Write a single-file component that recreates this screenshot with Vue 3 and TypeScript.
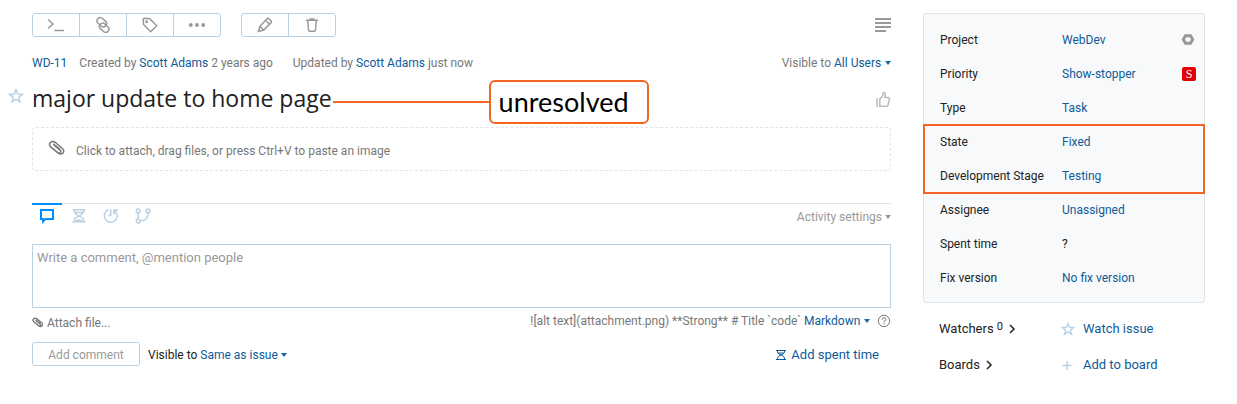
<script setup lang="ts">
import { ref } from 'vue'

interface Field {
  name: string
  value: string
  plain?: boolean
  mark?: 'project' | 'priority'
}

const groups: { marked: boolean; fields: Field[] }[] = [
  {
    marked: false,
    fields: [
      { name: 'Project', value: 'WebDev', mark: 'project' },
      { name: 'Priority', value: 'Show-stopper', mark: 'priority' },
      { name: 'Type', value: 'Task' },
    ],
  },
  {
    marked: true,
    fields: [
      { name: 'State', value: 'Fixed' },
      { name: 'Development Stage', value: 'Testing' },
    ],
  },
  {
    marked: false,
    fields: [
      { name: 'Assignee', value: 'Unassigned' },
      { name: 'Spent time', value: '?', plain: true },
      { name: 'Fix version', value: 'No fix version' },
    ],
  },
]

const activeTab = ref(0)
const comment = ref('')
const tabs = ['Comments', 'Spent time', 'History', 'VCS changes']
</script>

<template>
  <div class="page">
    <main class="issue">
      <div class="toolbar">
        <div class="group">
          <button type="button" aria-label="Apply command">
            <svg width="20" height="16" viewBox="0 0 20 16"><path d="M2 2.500l5 4.500-5 4.500M8.500 13.500h9.500" /></svg>
          </button>
          <button type="button" aria-label="Link issue">
            <svg width="16" height="16" viewBox="0 0 16 16"><g transform="rotate(42 8 8)"><rect x="0" y="3.500" width="10.500" height="6.500" rx="3.250" /><rect x="5.500" y="6" width="10.500" height="6.500" rx="3.250" /></g></svg>
          </button>
          <button type="button" aria-label="Add tag">
            <svg width="16" height="16" viewBox="0 0 16 16"><path d="M1.200 2.300l.3 5.200 7.200 7.200 6-6L7.700 1.700l-5.300-.4q-1.200 0-1.200 1z" /><circle cx="4.600" cy="4.800" r=".7" /></svg>
          </button>
          <button type="button" aria-label="More actions">
            <svg width="18" height="16" viewBox="0 0 18 16"><g class="solid"><circle cx="2.800" cy="8" r="1.900" /><circle cx="9" cy="8" r="1.900" /><circle cx="15.200" cy="8" r="1.900" /></g></svg>
          </button>
        </div>
        <div class="group">
          <button type="button" aria-label="Edit issue">
            <svg width="16" height="16" viewBox="0 0 16 16"><path d="M1.500 14.500l1.300-5L9.700 2q1.200-1.200 2.500 0l1.700 1.700q1 1.100 0 2.200L6.800 13zM2.800 9.500L6.800 13M8.600 3.500l4 3.800" /></svg>
          </button>
          <button type="button" aria-label="Delete issue">
            <svg width="16" height="16" viewBox="0 0 16 16"><path d="M2 3.200h12M5.500 2h5M3.700 3.500l.8 9.200q.1 1.600 1.600 1.600h3.800q1.500 0 1.600-1.600l.8-9.200" /></svg>
          </button>
        </div>
        <button class="bare view" type="button" aria-label="View mode">
          <svg width="16" height="14" viewBox="0 0 16 14"><path d="M0 1h16M0 5h16M0 9h16M0 13h11" /></svg>
        </button>
      </div>

      <div class="meta">
        <a class="id" href="#">WD-11</a>
        <span>Created by <a href="#">Scott Adams</a> 2 years ago</span>
        <span class="updated">Updated by <a href="#">Scott Adams</a> just now</span>
        <label class="pick visibility">Visible to
          <select><option>All Users</option></select><i class="caret"></i>
        </label>
      </div>

      <div class="headline">
        <button class="bare star" type="button" aria-label="Star issue">
          <svg width="16" height="16" viewBox="0 0 16 16"><path d="M8 1.700l1.700 4.300 4.700.3-3.600 3 1.200 4.600L8 11.300l-4 2.600 1.200-4.600-3.600-3 4.700-.3z" /></svg>
        </button>
        <h1>major update to home page</h1>
        <span class="leader"></span>
        <span class="callout">unresolved</span>
        <button class="bare like" type="button" aria-label="Vote">
          <svg width="16" height="18" viewBox="0 0 16 18"><path d="M2 7v9M4.800 8l3-3.300.5-3q2-.5 2.200 1.300L9.800 6.500h3.400q1.500.2 1.200 1.700l-1.300 5.500q-.4 1.500-1.800 1.500H4.800z" /></svg>
        </button>
      </div>

      <button class="drop" type="button">
        <svg class="clip" width="18" height="16" viewBox="0 0 18 16"><path d="M3.800 8L10.200 13.200q2.800 1.800 4.800-.2 1.700-2.300-.6-4.500L7.200 2.300Q4.600.5 2.500 2.300.4 4.600 2.700 6.900l7 5.700q1.500 1 2.600-.1 1-1.300-.2-2.400L6.200 5.200M5.200 3.800l7 5.800" /></svg>
        Click to attach, drag files, or press Ctrl+V to paste an image
      </button>

      <div class="activity">
        <button
          v-for="(tab, i) in tabs"
          :key="tab"
          class="tab"
          :class="{ active: activeTab === i }"
          type="button"
          :aria-label="tab"
          @click="activeTab = i"
        >
          <svg v-if="i === 0" width="16" height="16" viewBox="0 0 16 16"><path class="thick" d="M2 2h12v9H6.500L4 13.500V11H2z" /></svg>
          <svg v-else-if="i === 1" width="16" height="16" viewBox="0 0 16 16"><path d="M1.500 1.800h13M1.500 13.800h13M3.500 2v2q0 1.500 4.500 3.800Q12.500 5.500 12.500 4V2M3.500 13.500v-2Q3.500 10 8 7.800q4.500 2.200 4.500 3.700v2M4 4.500h8M5 13q3-2 6 0" /></svg>
          <svg v-else-if="i === 2" width="16" height="16" viewBox="0 0 16 16"><path d="M5.500 1.800a6.400 6.400 0 1 0 8 3.200M7.800 1v6.500H5.300M10.800 6.500V2.300h4.200M11 2.500l3 3.500" /></svg>
          <svg v-else width="16" height="16" viewBox="0 0 16 16"><circle cx="3.200" cy="3" r="1.900" /><circle cx="3.200" cy="13" r="1.900" /><circle cx="13" cy="3" r="1.900" /><path d="M3.200 5v6M5 12.800q8 .2 8-7.800" /></svg>
        </button>
        <button class="bare settings" type="button">Activity settings<i class="caret"></i></button>
      </div>

      <textarea v-model="comment" aria-label="Comment" placeholder="Write a comment, @mention people"></textarea>

      <div class="under">
        <button class="bare attach" type="button">
          <svg class="clip" width="12" height="11" viewBox="0 0 18 16"><path d="M3.800 8L10.200 13.200q2.800 1.800 4.800-.2 1.700-2.300-.6-4.500L7.200 2.300Q4.600.5 2.500 2.300.4 4.600 2.700 6.900l7 5.700q1.500 1 2.600-.1 1-1.300-.2-2.400L6.200 5.200M5.200 3.800l7 5.800" /></svg>
          Attach file...
        </button>
        <label class="pick syntax">![alt text](attachment.png) **Strong** # Title `code`
          <select><option>Markdown</option></select><i class="caret"></i>
        </label>
        <a class="help" href="#" aria-label="Markdown help">
          <svg width="14" height="14" viewBox="0 0 14 14"><circle cx="7" cy="7" r="5.700" /><path d="M5 5.700Q5 3.800 7 3.800t2 1.700Q9 6.600 7 7.300v1M7 9.200v1.200" /></svg>
        </a>
      </div>

      <div class="submit">
        <button class="add" type="button" disabled>Add comment</button>
        <label class="pick same">Visible to
          <select><option>Same as issue</option></select><i class="caret"></i>
        </label>
        <a class="spent" href="#">
          <svg width="12" height="12" viewBox="0 0 12 12"><path d="M1 1.500h10M1 10.500h10M2.500 2v1.500Q3 5 6 6q3-1 3.500-2.500V2M2.500 10.500V9Q3 7 6 6q3 1 3.500 3v1.500M3 4h6" /></svg>
          Add spent time
        </a>
      </div>
    </main>

    <aside class="side">
      <div class="panel">
        <div v-for="(group, g) in groups" :key="g" class="fields" :class="{ marked: group.marked }">
          <div v-for="field in group.fields" :key="field.name" class="field">
            <span class="name">{{ field.name }}</span>
            <span v-if="field.plain">{{ field.value }}</span>
            <button v-else class="bare value" type="button" :aria-label="field.name + ': ' + field.value">{{ field.value }}</button>
            <svg v-if="field.mark === 'project'" class="mark" width="14" height="14" viewBox="0 0 14 14"><path class="nut" d="M4.500 2.800h5L11.700 6.500l-2.200 3.700h-5L2.300 6.500z" /></svg>
            <span v-else-if="field.mark === 'priority'" class="mark badge">S</span>
          </div>
        </div>
      </div>
      <div class="extra">
        <button class="bare more" type="button">Watchers <sup>0</sup>
          <svg width="8" height="10" viewBox="0 0 8 10"><path d="M2 1l4 4-4 4" /></svg>
        </button>
        <button class="bare action" type="button">
          <svg width="14" height="14" viewBox="0 0 16 16"><path d="M8 1.700l1.700 4.300 4.700.3-3.600 3 1.200 4.600L8 11.300l-4 2.600 1.200-4.600-3.600-3 4.700-.3z" /></svg>
          Watch issue
        </button>
        <button class="bare more" type="button">Boards
          <svg width="8" height="10" viewBox="0 0 8 10"><path d="M2 1l4 4-4 4" /></svg>
        </button>
        <button class="bare action" type="button">
          <svg width="14" height="14" viewBox="0 0 14 14"><path d="M6 3v9M1.500 7.500h9" /></svg>
          Add to board
        </button>
      </div>
    </aside>
  </div>
</template>

<style>
body {
  margin: 0;
  background: #fff;
}
</style>

<style scoped>
.page {
  display: flex;
  align-items: flex-start;
  gap: 32px;
  padding: 13px 32px;
  font: 12px/16px Roboto, "Open Sans", sans-serif;
  color: #777;
}
*,
*::before,
*::after {
  box-sizing: border-box;
}
button,
select,
textarea {
  font: inherit;
  color: inherit;
}
a {
  color: #0f5b99;
  text-decoration: none;
}
svg {
  display: block;
  flex: none;
  fill: none;
  stroke: currentColor;
  stroke-width: 1.5;
}
.bare {
  display: flex;
  align-items: center;
  padding: 0;
  border: 0;
  background: none;
  white-space: nowrap;
}
.issue {
  flex: 1;
  min-width: 0;
}
.toolbar {
  display: flex;
  gap: 20px;
}
.group {
  display: flex;
  border: 1px solid #b8d1e5;
  border-radius: 3px;
}
.group button {
  display: flex;
  align-items: center;
  justify-content: center;
  width: 47px;
  height: 22px;
  padding: 0;
  border: 0;
  background: none;
  color: #999;
}
.group button:first-child {
  width: 46px;
}
.group button + button {
  border-left: 1px solid #b8d1e5;
}
.solid {
  fill: currentColor;
  stroke: none;
}
.view {
  margin-left: auto;
  color: #999;
}
.view svg {
  stroke-width: 2;
}
.meta {
  display: flex;
  align-items: center;
  height: 20px;
  margin-top: 16px;
  white-space: nowrap;
}
.id {
  margin-right: 12px;
}
.updated {
  margin-left: 20px;
}
.pick {
  display: flex;
  align-items: center;
  gap: 3px;
  white-space: nowrap;
}
.pick select {
  appearance: none;
  padding: 0;
  border: 0;
  background: none;
  color: #0f5b99;
}
.visibility {
  margin-left: auto;
}
.caret {
  width: 0;
  border: 3px solid transparent;
  border-top: 4px solid #1a66a3;
  border-bottom: 0;
}
.headline {
  display: flex;
  align-items: center;
  height: 44px;
  margin: 7px 0 3px -24px;
}
.star {
  width: 24px;
  align-self: flex-start;
  margin-top: 8px;
  color: #b8d1e5;
}
h1 {
  margin: 0 1px 8px 0;
  font: 400 23px/32px "Open Sans", sans-serif;
  color: #222;
  white-space: nowrap;
}
.leader {
  flex: 0 1 156px;
  height: 2px;
  background: #f26522;
}
.callout {
  width: 160px;
  padding: 0 8px;
  border: 2px solid #f26522;
  border-radius: 6px;
  font: 27px/40px Lato, sans-serif;
  color: #000;
}
.like {
  margin: 0 0 4px auto;
  color: #bbb;
}
.drop {
  display: flex;
  align-items: center;
  gap: 10px;
  width: 100%;
  height: 44px;
  padding: 3px 15px 0;
  border: 1px dashed #dfe5eb;
  border-radius: 4px;
  background: none;
}
.drop .clip {
  margin-bottom: 6px;
}
.activity {
  display: flex;
  height: 41px;
  margin-top: 32px;
  border-top: 1px solid #dfe5eb;
}
.tab {
  display: flex;
  justify-content: center;
  width: 30px;
  height: 26px;
  margin: -1px 2px 0 0;
  padding: 3px 0 0;
  border: 0;
  border-top: 2px solid transparent;
  background: none;
  color: #b8d1e5;
}
.tab.active {
  border-top-color: #008eff;
  color: #008eff;
}
.thick {
  stroke-width: 2;
}
.settings {
  gap: 3px;
  height: 26px;
  margin-left: auto;
  color: #999;
}
.settings .caret {
  border-top-color: #999;
}
textarea {
  display: block;
  width: 100%;
  height: 64px;
  padding: 5px 4px;
  border: 1px solid #b8d1e5;
  border-radius: 0;
  font-size: 13px;
  resize: none;
}
textarea::placeholder {
  color: #999;
}
.under {
  display: flex;
  align-items: center;
  height: 24px;
  margin-top: 1px;
}
.attach {
  gap: 3px;
  padding-top: 3px;
}
.attach .clip {
  stroke-width: 2;
}
.syntax {
  margin-left: auto;
}
.help {
  margin-left: 7px;
  color: #777;
}
.help svg {
  stroke-width: 1;
}
.submit {
  display: flex;
  align-items: center;
  margin-top: 9px;
}
.add {
  width: 108px;
  height: 24px;
  padding: 2px 0 0;
  border: 1px solid #b8d1e5;
  border-radius: 3px;
  background: none;
  color: #999;
}
.same {
  margin: 2px 0 0 8px;
  color: #222;
}
.spent {
  display: flex;
  align-items: center;
  gap: 4px;
  margin: 2px 12px 0 auto;
  font-size: 13px;
}
.spent svg {
  stroke-width: 1;
}
.side {
  flex: 0 0 282px;
  color: #222;
}
.panel {
  padding: 9px 0 7px;
  border: 1px solid #dfe5eb;
  border-radius: 3px;
  background: #f7f9fa;
}
.fields {
  position: relative;
}
.marked::after {
  content: "";
  position: absolute;
  inset: -1px;
  border: 2px solid #f26522;
  pointer-events: none;
}
.field {
  display: grid;
  grid-template-columns: 122px 1fr auto;
  align-items: center;
  height: 34px;
  padding: 0 8px 0 16px;
}
.value,
.action {
  color: #0f5b99;
}
.mark.badge {
  width: 14px;
  border-radius: 2px;
  background: #e30000;
  color: #fff;
  font: 12px/14px "Liberation Serif", serif;
  text-align: center;
}
svg.mark {
  margin-right: 1px;
  color: #999;
}
.nut {
  stroke-width: 3;
}
.extra {
  display: grid;
  grid-template-columns: 122px 1fr;
  grid-auto-rows: 36px;
  padding: 8px 0 0 16px;
  font-size: 13px;
}
.more {
  gap: 5px;
}
.action {
  gap: 8px;
}
.action svg {
  color: #b8d1e5;
}
.more sup {
  margin: -4px 0 0 -2px;
  font-size: 11px;
  line-height: 10px;
}
</style>
